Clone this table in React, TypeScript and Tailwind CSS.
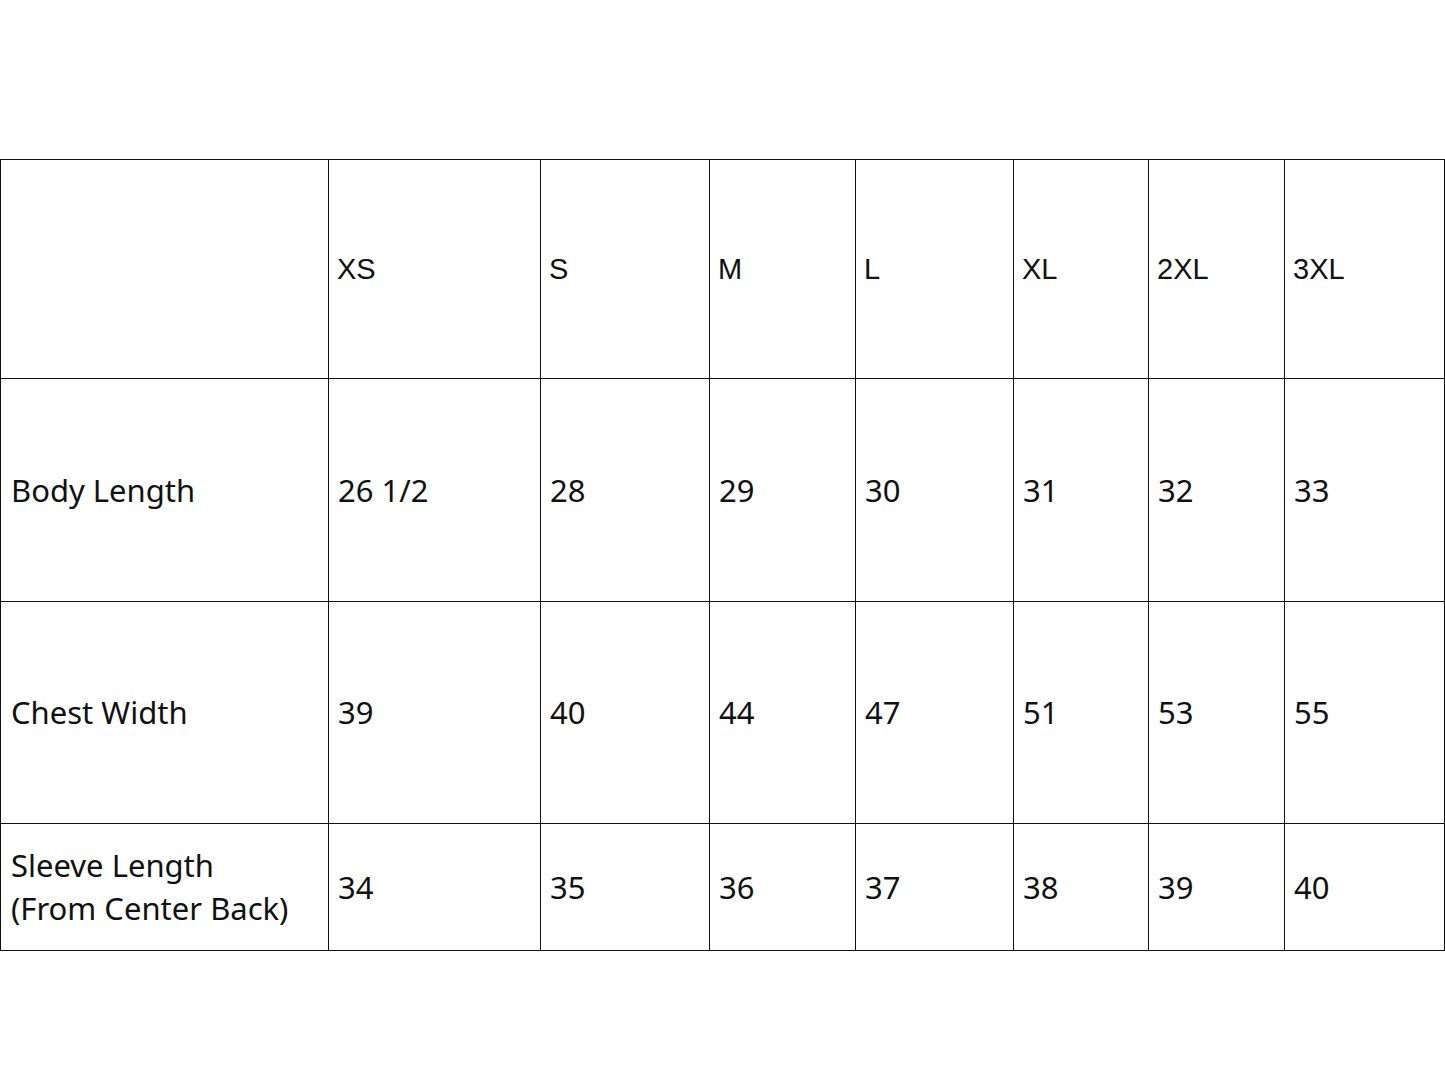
import React from "react";

const sizes = ["XS", "S", "M", "L", "XL", "2XL", "3XL"];
const rows: { label: React.ReactNode; values: string[]; h: string }[] = [
  { label: "Body Length", values: ["26 1/2", "28", "29", "30", "31", "32", "33"], h: "h-[223px]" },
  { label: "Chest Width", values: ["39", "40", "44", "47", "51", "53", "55"], h: "h-[222px]" },
  {
    label: (
      <>
        Sleeve Length
        <br />
        (From Center Back)
      </>
    ),
    values: ["34", "35", "36", "37", "38", "39", "40"],
    h: "h-[127px]",
  },
];
const widths = [328, 212, 169, 146, 158, 135, 136, 160];

export default function App() {
  return (
    <div className="w-[1445px] h-[1084px] bg-white pt-[159px]">
      <table className="table-fixed border-collapse w-[1444px] text-[#111]">
        <colgroup>
          {widths.map((w, i) => (
            <col key={i} style={{ width: w }} />
          ))}
        </colgroup>
        <tbody>
          <tr className="h-[219px]">
            <td className="border-[1.5px] border-[#111] p-0"></td>
            {sizes.map((s) => (
              <td
                key={s}
                className="border-[1.5px] border-[#111] pl-[8px] align-middle text-[29px] leading-[36px] [font-family:'Liberation_Sans',Arial,sans-serif]"
              >
                {s}
              </td>
            ))}
          </tr>
          {rows.map((r, ri) => (
            <tr key={ri} className={r.h}>
              <td className="border-[1.5px] border-[#111] pl-[10px] align-middle text-[31px] leading-[43px] [font-family:'Noto_Sans',sans-serif]">
                {r.label}
              </td>
              {r.values.map((v, vi) => (
                <td
                  key={vi}
                  className="border-[1.5px] border-[#111] pl-[9px] align-middle text-[31px] leading-[43px] [font-family:'Noto_Sans',sans-serif]"
                >
                  {v}
                </td>
              ))}
            </tr>
          ))}
        </tbody>
      </table>
    </div>
  );
}
